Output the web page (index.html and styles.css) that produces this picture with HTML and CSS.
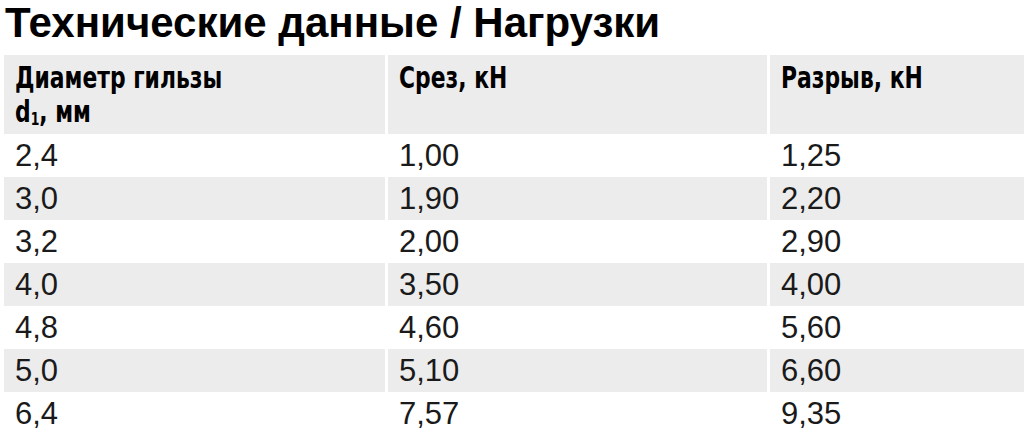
FILE: index.html
```html
<!DOCTYPE html>
<html lang="ru">
<head>
<meta charset="utf-8">
<title>Технические данные / Нагрузки</title>
<link rel="stylesheet" href="styles.css">
</head>
<body>
<h1 class="title">Технические данные / Нагрузки</h1>
<table class="data">
  <colgroup>
    <col class="c1"><col class="c2"><col class="c3">
  </colgroup>
  <thead>
    <tr>
      <th><span class="cond">Диаметр гильзы<br>d<sub>1</sub>, мм</span></th>
      <th><span class="cond">Срез, кН</span></th>
      <th><span class="cond">Разрыв, кН</span></th>
    </tr>
  </thead>
  <tbody>
    <tr><td>2,4</td><td>1,00</td><td>1,25</td></tr>
    <tr><td>3,0</td><td>1,90</td><td>2,20</td></tr>
    <tr><td>3,2</td><td>2,00</td><td>2,90</td></tr>
    <tr><td>4,0</td><td>3,50</td><td>4,00</td></tr>
    <tr><td>4,8</td><td>4,60</td><td>5,60</td></tr>
    <tr><td>5,0</td><td>5,10</td><td>6,60</td></tr>
    <tr><td>6,4</td><td>7,57</td><td>9,35</td></tr>
  </tbody>
</table>
</body>
</html>
```
FILE: styles.css
```css
html, body {
  margin: 0;
  padding: 0;
  overflow: hidden;
  background: #fff;
}
body {
  font-family: "Liberation Sans", Arial, sans-serif;
  color: #111;
}
.title {
  margin: 0 0 9px 5px;
  font-size: 42px;
  font-weight: bold;
  line-height: 46px;
  color: #000;
  white-space: nowrap;
}
.data {
  border-collapse: separate;
  border-spacing: 0;
  table-layout: fixed;
  width: 1020px;
  margin-left: 4px;
}
.c1 { width: 384px; }
.c2 { width: 382px; }
.c3 { width: 254px; }
.data th,
.data td {
  border-right: 3px solid #fff;
}
.data th:last-child,
.data td:last-child {
  border-right: 0;
}
.data th {
  background: #ececec;
  text-align: left;
  vertical-align: top;
  font-family: "DejaVu Sans Condensed", "Liberation Sans", sans-serif;
  font-weight: bold;
  font-size: 30px;
  line-height: 34px;
  color: #000;
  padding: 6px 11px 5px;
  height: 68px;
}
.cond {
  display: inline-block;
  transform: scaleX(0.81);
  transform-origin: left top;
  white-space: nowrap;
}
.data th sub {
  font-size: 17px;
  line-height: 0;
  vertical-align: -3px;
}
.data td {
  font-size: 31px;
  line-height: 43px;
  height: 43px;
  padding: 0 11px;
  color: #1a1a1a;
}
.data tbody tr:nth-child(even) td {
  background: #ececec;
}
```
